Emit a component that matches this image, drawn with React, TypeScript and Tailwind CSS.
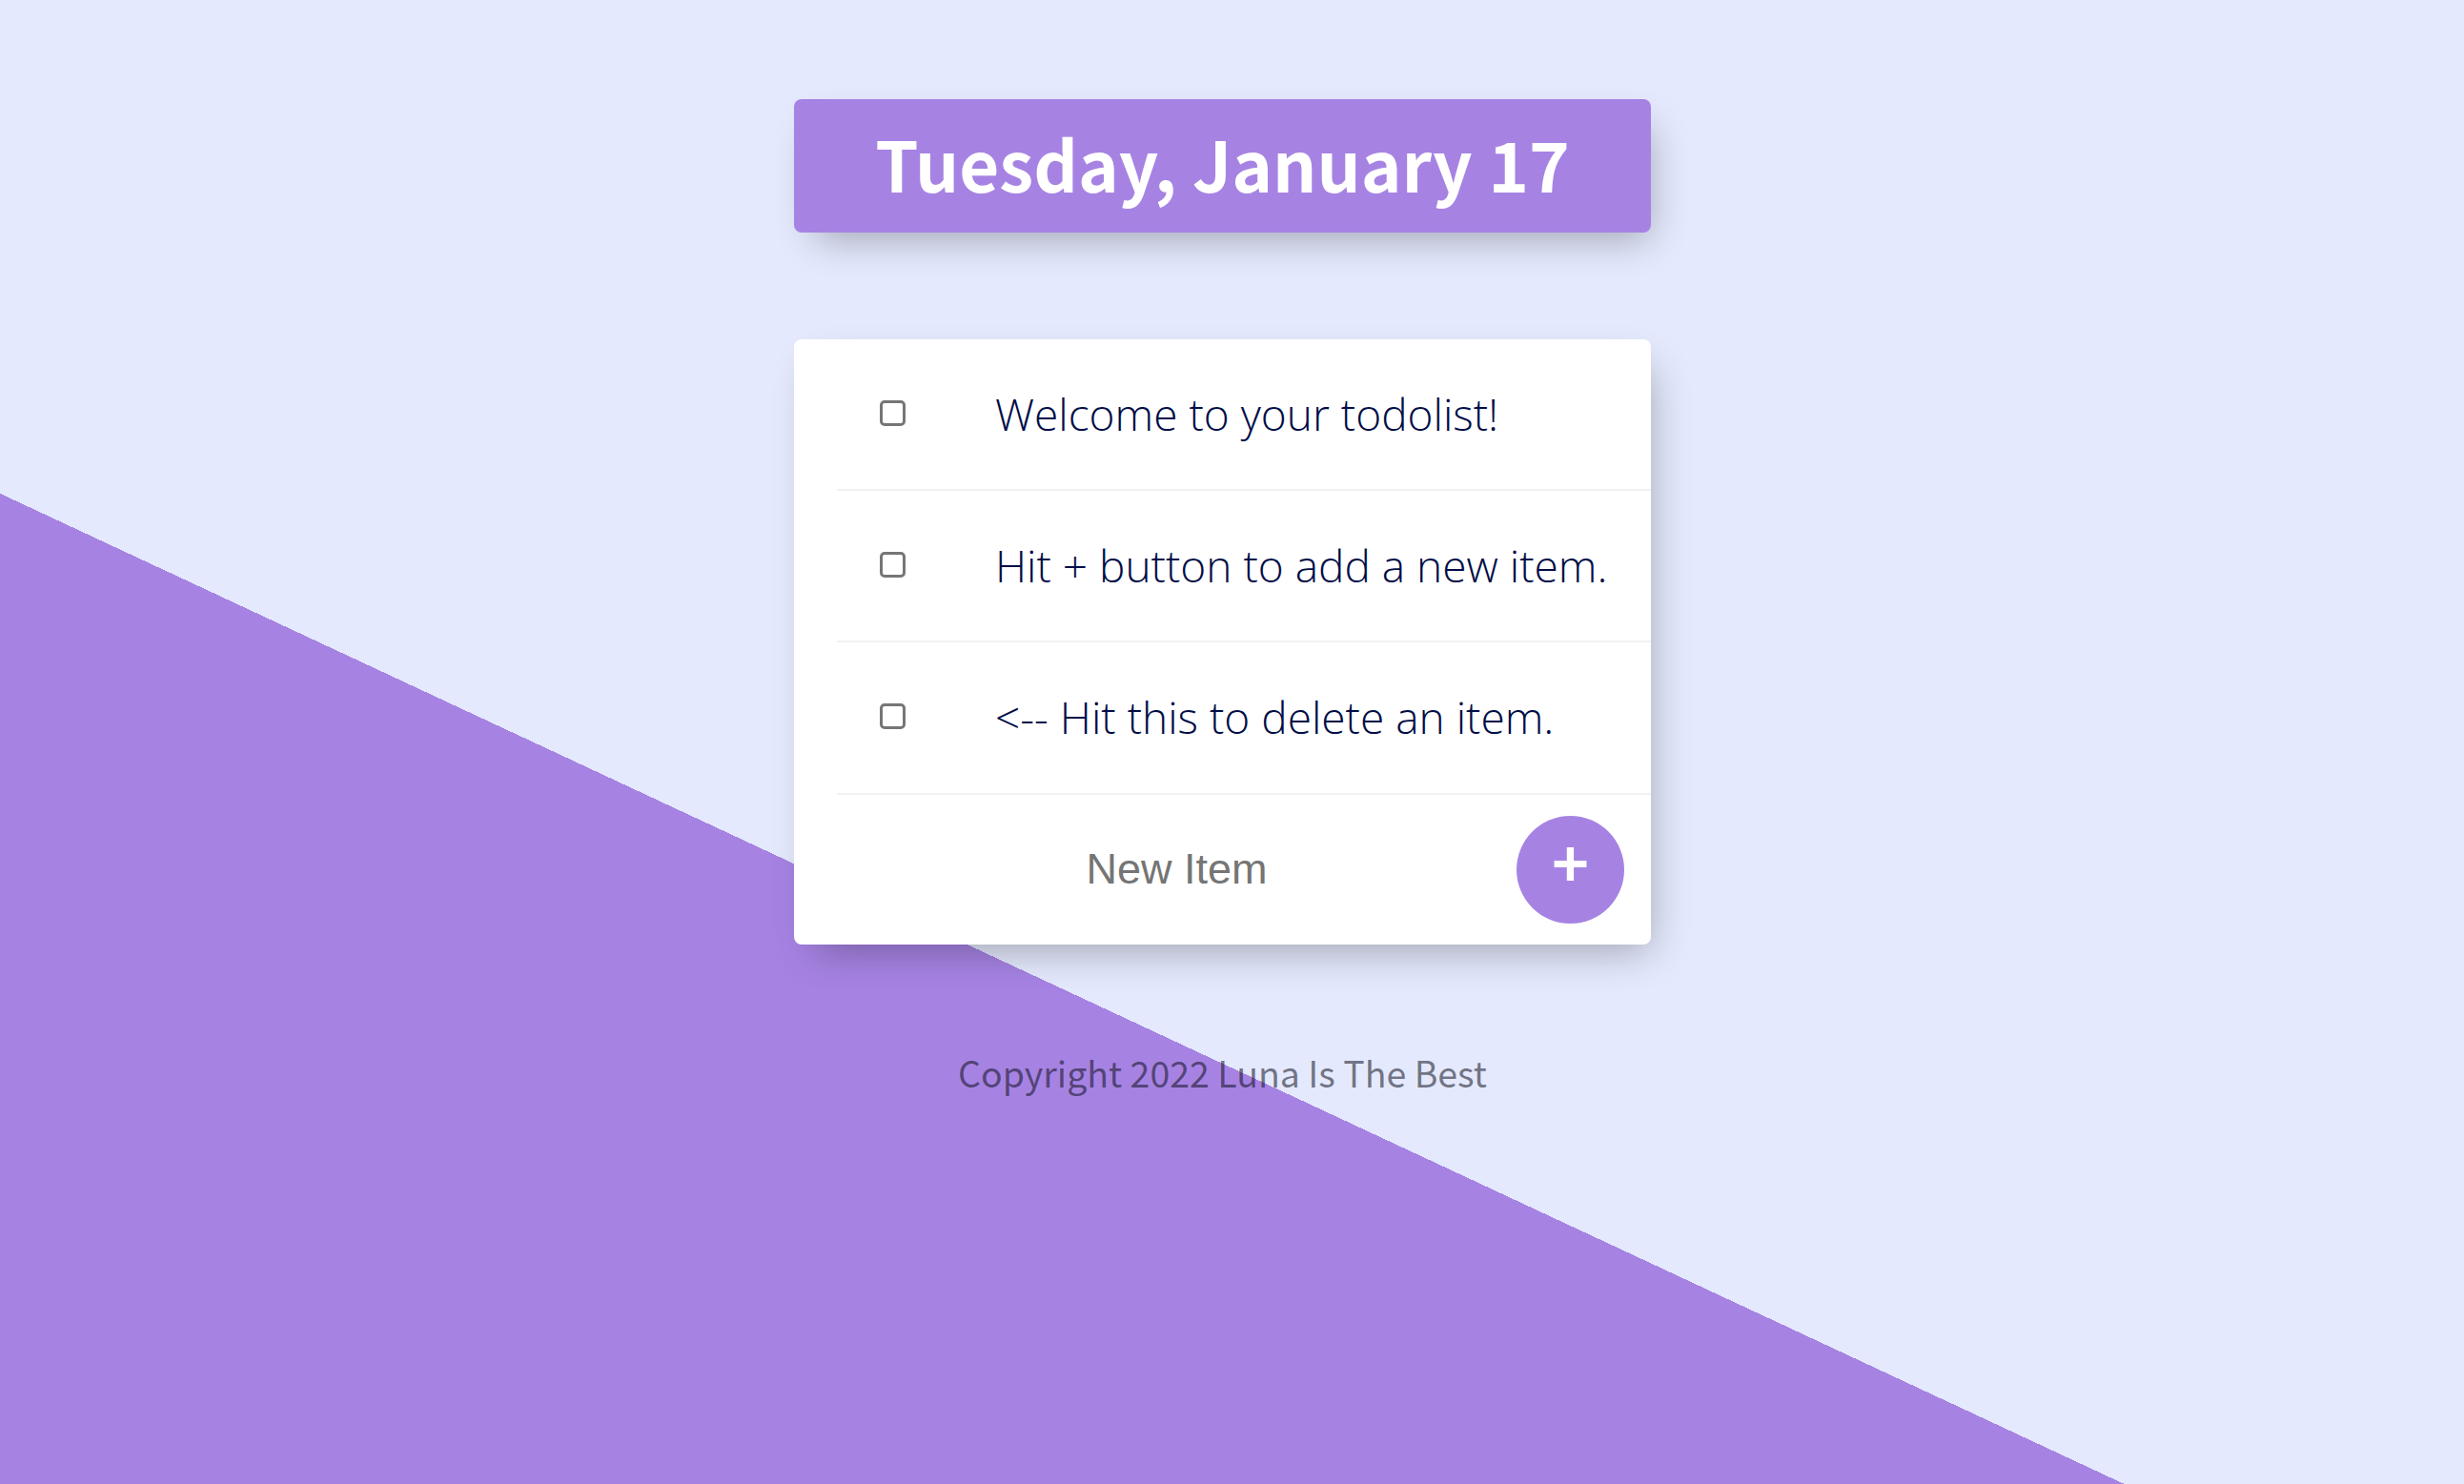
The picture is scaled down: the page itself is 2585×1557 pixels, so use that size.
const items = ["Welcome to your todolist!", "Hit + button to add a new item.", "<-- Hit this to delete an item."];

export default function App() {
  return (
    <div className="h-screen w-full overflow-hidden bg-[linear-gradient(205deg,#e4e9fd_50%,#a683e3_50%)] bg-[length:100%_2241px] bg-no-repeat pr-[20px] font-['Noto_Sans_CJK_SC',sans-serif]">
      <div className="flex flex-col items-center pt-[104px]">
        {/* 标题 */}
        <div className="flex h-[140px] w-[899px] items-center justify-center rounded-[8px] bg-[#a683e3] shadow-[10px_18px_40px_-12px_rgba(0,0,0,0.3)]">
          <h1 className="-mt-[6px] text-[72.5px] font-bold text-white">Tuesday, January 17</h1>
        </div>

        {/* 列表 */}
        <div className="mt-[112px] flex w-[899px] flex-col rounded-[8px] bg-white pl-[45px] shadow-[10px_18px_40px_-12px_rgba(0,0,0,0.3)]">
          {items.map((item) => (
            <div key={item} className="flex h-[159.2px] items-center border-b-2 border-[#f1f1f1] pl-[45px]">
              <input type="checkbox" className="-mt-[2px] h-[27px] w-[27px] appearance-none rounded-[5px] border-[3px] border-[#767676] bg-white" />
              <p className="ml-[94px] text-[46px] font-light text-[#000d47] font-['Open_Sans',sans-serif]">{item}</p>
            </div>
          ))}
          <form className="flex h-[157px] items-center">
            <input type="text" placeholder="New Item" className="h-[60px] w-[713px] text-center text-[45px] font-['Liberation_Sans',sans-serif] placeholder:text-[#757575] outline-none" />
            <button type="button" className="flex h-[113px] w-[113px] items-center justify-center rounded-full bg-[#a683e3] pb-[20px] text-[66px] font-bold text-white">+</button>
          </form>
        </div>

        <footer className="mt-[106px] text-[37.5px] text-[#0d0d1a]/55">Copyright 2022 Luna Is The Best</footer>
      </div>
    </div>
  );
}
